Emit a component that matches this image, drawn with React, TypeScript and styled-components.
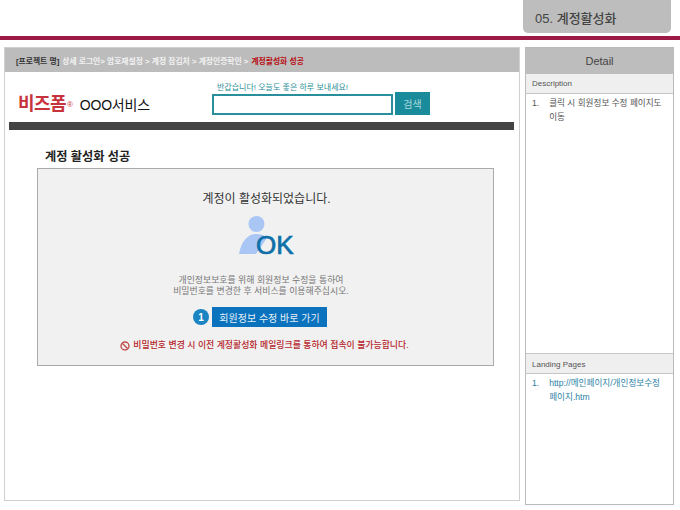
import styled, { createGlobalStyle } from "styled-components";

const GlobalStyle = createGlobalStyle`
  html, body { margin: 0; padding: 0; background: #fff; }
  body { font-family: "Liberation Sans", "Noto Sans CJK KR", sans-serif; color: #444; }
  * { box-sizing: border-box; }
`;

const Page = styled.div`
  width: 680px;
  height: 510px;
  overflow: hidden;
`;

const TopBar = styled.header`
  height: 36px;
  display: flex;
  justify-content: flex-end;
  padding-right: 9px;
`;

const PageTab = styled.div`
  width: 148px;
  height: 33px;
  background: #bdbdbd;
  border-radius: 0 0 5px 5px;
  padding: 11px 0 0 12px;
  font-size: 13px;
  line-height: 15px;
  font-weight: 500;
  color: #444;
`;

const Rule = styled.div`
  height: 4px;
  background: #9c1a45;
`;

const Content = styled.div`
  display: flex;
  gap: 5px;
  padding: 7px 0 0 4px;
`;

const Screen = styled.main`
  width: 516px;
  height: 454px;
  border: 1px solid #d0d0d0;
`;

const Crumbs = styled.div`
  height: 24px;
  background: #bcbcbc;
  padding-left: 11px;
  display: flex;
  align-items: center;
  gap: 3px;
  font-size: 7.8px;
  font-weight: 700;
  color: #f2f2f2;
  white-space: nowrap;
`;

const CrumbProject = styled.span`
  color: #333;
`;

const CrumbCurrent = styled.span`
  color: #b80d12;
`;

const Masthead = styled.div`
  height: 50px;
  display: flex;
  padding: 10px 0 0 13px;
`;

const Brand = styled.div`
  width: 194px;
  display: flex;
  align-items: baseline;
  padding-top: 11px;
  white-space: nowrap;
`;

const BrandMark = styled.span`
  font-size: 18px;
  line-height: 22px;
  font-weight: 700;
  color: #c7333c;
  letter-spacing: -0.6px;
`;

const BrandReg = styled.sup`
  font-size: 8px;
  color: #c7333c;
  line-height: 0;
  margin: 0 7px 0 1px;
  position: relative;
  top: -3px;
`;

const BrandService = styled.span`
  font-size: 14px;
  color: #111;
  letter-spacing: -0.2px;
`;

const SearchArea = styled.div`
  display: flex;
  flex-direction: column;
`;

const Greeting = styled.div`
  height: 12px;
  padding: 1px 0 0 5px;
  font-size: 8px;
  line-height: 10px;
  color: #2a8f98;
  white-space: nowrap;
`;

const SearchRow = styled.div`
  display: flex;
  align-items: flex-end;
  gap: 2px;
`;

const SearchInput = styled.div`
  width: 181px;
  height: 21px;
  border: 2px solid #2a8f9c;
  background: #fff;
`;

const SearchButton = styled.div`
  width: 35px;
  height: 23px;
  margin-top: -2px;
  background: #1a8b9b;
  color: #a9d8dc;
  font-size: 10px;
  display: flex;
  align-items: center;
  justify-content: center;
`;

const DarkBar = styled.div`
  height: 8px;
  margin: 0 5px 0 4px;
  background: #444;
`;

const Body = styled.div`
  padding: 19px 25px 0 32px;
`;

const Heading = styled.h2`
  margin: 0 0 3px 8px;
  font-size: 12.2px;
  line-height: 16px;
  font-weight: 700;
  color: #222;
`;

const ResultBox = styled.section`
  height: 198px;
  background: #f1f1f1;
  border: 1px solid #aaa;
  display: flex;
  flex-direction: column;
  align-items: center;
  padding-top: 22px;
`;

const ResultTitle = styled.div`
  font-size: 12px;
  line-height: 16px;
  color: #333;
  margin-left: 2px;
`;

const OkIcon = styled.svg`
  display: block;
  margin: 9px 0 19px 3px;
  overflow: visible;
`;

const Notice = styled.p`
  margin: 0 9px 0 0;
  font-size: 8.9px;
  line-height: 11px;
  text-align: center;
  color: #777;
`;

const ActionRow = styled.div`
  display: flex;
  align-items: center;
  gap: 3px;
  margin: 10px 0 12px -11px;
`;

const StepBadge = styled.span`
  width: 16px;
  height: 16px;
  border-radius: 50%;
  background: #1b84c2;
  color: #fff;
  font-size: 10px;
  font-weight: 700;
  display: flex;
  align-items: center;
  justify-content: center;
`;

const ActionButton = styled.div`
  width: 115px;
  height: 20px;
  background: #0b72bd;
  color: #e4f0f8;
  font-size: 10px;
  display: flex;
  align-items: center;
  justify-content: center;
  white-space: nowrap;
`;

const Warning = styled.div`
  display: flex;
  align-items: center;
  gap: 3px;
  margin-right: 2px;
  font-size: 8.9px;
  line-height: 13px;
  font-weight: 500;
  color: #b5252b;
  white-space: nowrap;
`;

const Detail = styled.aside`
  width: 149px;
  height: 458px;
  border: 1px solid #bbb;
  display: flex;
  flex-direction: column;
`;

const DetailTitle = styled.div`
  height: 26px;
  background: #bdbdbd;
  color: #444;
  font-size: 11px;
  display: flex;
  align-items: center;
  justify-content: center;
`;

const SectionLabel = styled.div`
  height: 20px;
  background: #efefef;
  border-bottom: 1px solid #c6c6c6;
  padding-left: 6px;
  font-size: 8px;
  line-height: 19px;
  color: #555;
`;

const LandingLabel = styled(SectionLabel)`
  border-top: 1px solid #c6c6c6;
  height: 21px;
  line-height: 22px;
`;

const SectionBody = styled.div<{ $grow?: boolean }>`
  ${(p) => (p.$grow ? "flex: 1;" : "height: 130px;")}
  padding: 3px 8px 0 6px;
`;

const Item = styled.div<{ $link?: boolean }>`
  display: flex;
  gap: 10px;
  font-size: 8.6px;
  line-height: 13.5px;
  color: ${(p) => (p.$link ? "#2c7fa5" : "#555")};
`;

const ItemText = styled.span`
  flex: 1;
  white-space: nowrap;
`;

export default function App() {
  return (
    <Page>
      <GlobalStyle />
      <TopBar>
        <PageTab>05. 계정활성화</PageTab>
      </TopBar>
      <Rule />
      <Content>
        <Screen>
          <Crumbs>
            <CrumbProject>[프로젝트 명]</CrumbProject>
            <span>상세 로그인&gt; 암호재설정 &gt; 계정 잠김처 &gt; 계정인증확인 &gt;</span>
            <CrumbCurrent>계정활성화 성공</CrumbCurrent>
          </Crumbs>
          <Masthead>
            <Brand>
              <BrandMark>비즈폼</BrandMark>
              <BrandReg>®</BrandReg>
              <BrandService>OOO서비스</BrandService>
            </Brand>
            <SearchArea>
              <Greeting>반갑습니다! 오늘도 좋은 하루 보내세요!</Greeting>
              <SearchRow>
                <SearchInput />
                <SearchButton>검색</SearchButton>
              </SearchRow>
            </SearchArea>
          </Masthead>
          <DarkBar />
          <Body>
            <Heading>계정 활성화 성공</Heading>
            <ResultBox>
              <ResultTitle>계정이 활성화되었습니다.</ResultTitle>
              <OkIcon width="56" height="40" viewBox="0 0 56 40">
                <circle cx="17.5" cy="8" r="8" fill="#aac6f5" />
                <path d="M0 38 C2 25 9 18 17 18 C22 18 26 19.5 28 22 L17 38 Z" fill="#aac6f5" />
                <text x="17" y="38" fontFamily="Liberation Sans" fontSize="26" fill="#0f6fa8" stroke="#0f6fa8" strokeWidth="0.7">OK</text>
              </OkIcon>
              <Notice>
                개인정보보호를 위해 회원정보 수정을 통하여
                <br />
                비밀번호를 변경한 후 서비스를 이용해주십시오.
              </Notice>
              <ActionRow>
                <StepBadge>1</StepBadge>
                <ActionButton>회원정보 수정 바로 가기</ActionButton>
              </ActionRow>
              <Warning>
                <svg width="10" height="10" viewBox="0 0 10 10" fill="none" stroke="#c0504d" strokeWidth="1.4">
                  <circle cx="5" cy="5" r="4" />
                  <path d="M2.2 2.2 L7.8 7.8" />
                </svg>
                비밀번호 변경 시 이전 계정활성화 메일링크를 통하여 접속이 불가능합니다.
              </Warning>
            </ResultBox>
          </Body>
        </Screen>
        <Detail>
          <DetailTitle>Detail</DetailTitle>
          <SectionLabel>Description</SectionLabel>
          <SectionBody $grow>
            <Item>
              <span>1.</span>
              <ItemText>
                클릭 시 회원정보 수정 페이지도
                <br />
                이동
              </ItemText>
            </Item>
          </SectionBody>
          <LandingLabel>Landing Pages</LandingLabel>
          <SectionBody>
            <Item $link>
              <span>1.</span>
              <ItemText>
                http://메인페이지/개인정보수정
                <br />
                페이지.htm
              </ItemText>
            </Item>
          </SectionBody>
        </Detail>
      </Content>
    </Page>
  );
}
